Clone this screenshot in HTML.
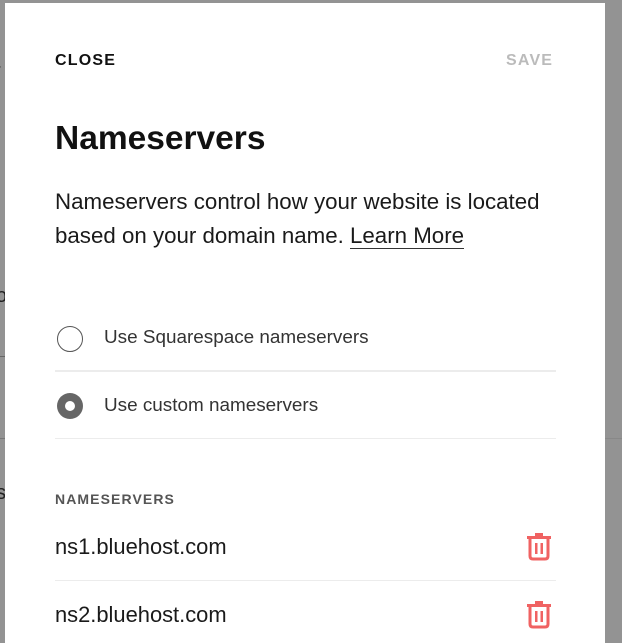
<!DOCTYPE html>
<html><head><style>
html,body{margin:0;padding:0;width:622px;height:643px;overflow:hidden;background:#939393;font-family:"Liberation Sans",sans-serif;}
.bgtxt{position:absolute;color:#222;font-size:20px;}
.m{position:absolute;left:5px;top:3px;width:600px;height:640px;background:#fff;}
.a{position:absolute;white-space:nowrap;}
.hr{position:absolute;left:50px;width:501px;height:2px;background:#ececec;}
</style></head><body>
<div class="bgtxt" style="left:-6px;top:60px;">r</div>
<div class="bgtxt" style="left:-4px;top:285px;">o</div>
<div style="position:absolute;left:0;top:356px;width:5px;height:1px;background:#666"></div>
<div style="position:absolute;left:0;top:438px;width:5px;height:1px;background:#777"></div>
<div style="position:absolute;left:605px;top:438px;width:17px;height:1px;background:#888"></div>
<div class="bgtxt" style="left:-4px;top:482px;">s</div>
<div class="m">
  <div class="a" style="left:50px;top:49px;font-size:16px;font-weight:bold;letter-spacing:1.2px;color:#111;">CLOSE</div>
  <div class="a" style="left:501px;top:49px;font-size:16px;font-weight:bold;letter-spacing:1.2px;color:#bbb;">SAVE</div>
  <div class="a" style="left:50px;top:117px;font-size:33.5px;font-weight:bold;color:#111;">Nameservers</div>
  <div class="a" style="left:50px;top:182px;font-size:22.3px;line-height:34px;color:#1a1a1a;">Nameservers control how your website is located<br>based on your domain name. <span style="border-bottom:1px solid #333;">Learn More</span></div>
  <div class="a" style="left:52px;top:323px;width:24px;height:24px;border:1px solid #555;border-radius:50%;"></div>
  <div class="a" style="left:99px;top:324px;font-size:18.9px;color:#333;">Use Squarespace nameservers</div>
  <div class="hr" style="top:367px;"></div>
  <div class="a" style="left:52px;top:390px;width:26px;height:26px;border-radius:50%;background:#666;"></div>
  <div class="a" style="left:60px;top:398px;width:10px;height:10px;border-radius:50%;background:#fff;"></div>
  <div class="a" style="left:99px;top:392px;font-size:18.9px;color:#333;">Use custom nameservers</div>
  <div class="hr" style="top:435px;height:1px;"></div>
  <div class="a" style="left:50px;top:488px;font-size:14px;font-weight:bold;letter-spacing:1.1px;color:#555;">NAMESERVERS</div>
  <div class="a" style="left:50px;top:531px;font-size:21.9px;color:#1a1a1a;">ns1.bluehost.com</div>
  <div class="hr" style="top:577px;height:1px;"></div>
  <div class="a" style="left:50px;top:599px;font-size:21.9px;color:#1a1a1a;">ns2.bluehost.com</div>
  <svg class="a" style="left:521px;top:530px" width="26" height="28" viewBox="0 0 26 28"><rect x="9" y="0" width="8" height="3" fill="#f06262"/><rect x="1" y="3" width="24" height="3" fill="#f06262"/><path d="M4 6 V23 Q4 26 7 26 H19 Q22 26 22 23 V6" fill="none" stroke="#f06262" stroke-width="3"/><rect x="9" y="10" width="2.5" height="11" fill="#f06262"/><rect x="14.5" y="10" width="2.5" height="11" fill="#f06262"/></svg>
  <svg class="a" style="left:521px;top:598px" width="26" height="28" viewBox="0 0 26 28"><rect x="9" y="0" width="8" height="3" fill="#f06262"/><rect x="1" y="3" width="24" height="3" fill="#f06262"/><path d="M4 6 V23 Q4 26 7 26 H19 Q22 26 22 23 V6" fill="none" stroke="#f06262" stroke-width="3"/><rect x="9" y="10" width="2.5" height="11" fill="#f06262"/><rect x="14.5" y="10" width="2.5" height="11" fill="#f06262"/></svg>
</div>
</body></html>
